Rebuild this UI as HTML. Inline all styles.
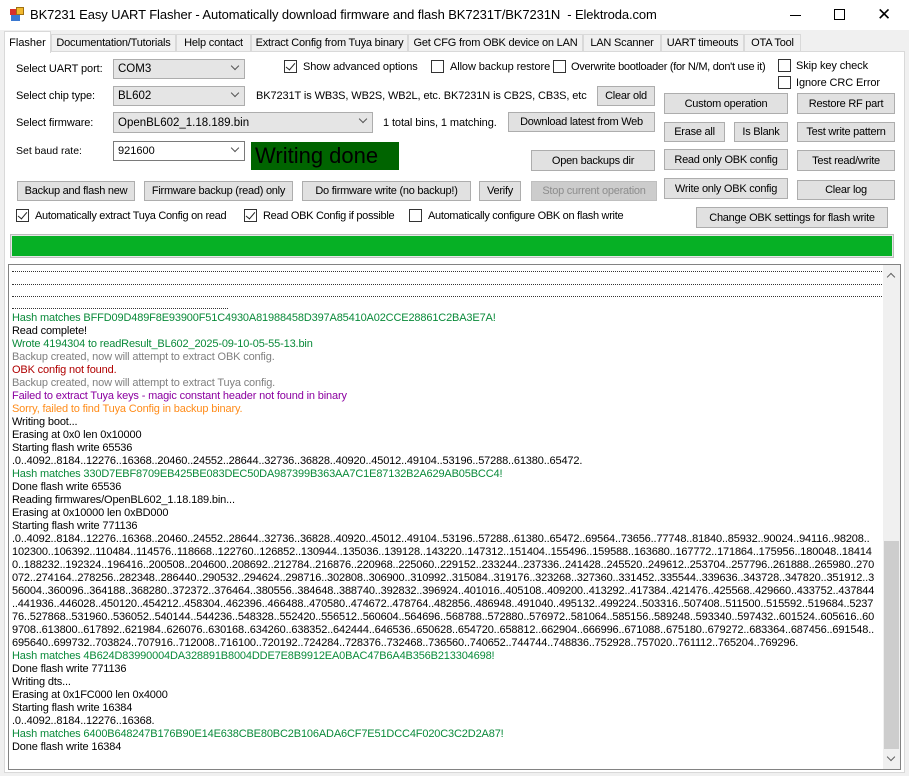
<!DOCTYPE html>
<html><head><meta charset="utf-8"><style>
*{box-sizing:border-box;margin:0;padding:0}
body{width:909px;height:776px;overflow:hidden;background:#f0f0f0;font-family:"Liberation Sans",sans-serif;font-size:11px;color:#000;position:relative}
.a{position:absolute;white-space:nowrap}
.u{font-size:11px;letter-spacing:-0.1px}
.btn{position:absolute;background:#e1e1e1;border:1px solid #adadad;text-align:center;font-size:11px;display:flex;align-items:center;justify-content:center;white-space:nowrap;letter-spacing:-0.25px}
.cb{position:absolute;width:13px;height:13px;border:1px solid #333;background:#fff}
.cb.on::after{content:"";position:absolute;left:3px;top:0px;width:4px;height:8px;border:solid #222;border-width:0 1.3px 1.3px 0;transform:rotate(40deg)}
.combo{position:absolute;background:#e5e5e5;border:1px solid #adadad;padding-left:4px;display:flex;align-items:center;font-size:11.5px}
.combo .ar{position:absolute;right:6px;top:3px;width:6px;height:6px;border:solid #555;border-width:0 1px 1px 0;transform:rotate(45deg)}
.tab{position:absolute;top:34px;height:17px;background:#f0f0f0;border:1px solid #d9d9d9;border-bottom:none;font-size:11px;letter-spacing:-0.2px;padding-top:2px;text-align:center;white-space:nowrap;overflow:hidden}
#log{position:absolute;left:8px;top:264px;width:893px;height:506px;background:#fff;border:1px solid #828282;overflow:hidden}
#log .l{position:absolute;left:3px;font-size:11px;white-space:pre;line-height:13px;letter-spacing:-0.15px}
.dot{position:absolute;left:3px;height:1px;border-top:1px dotted #333}
.g{color:#0a8a3a}.gr{color:#808080}.r{color:#b00000}.p{color:#8b00a0}.o{color:#ff8c1a}
</style></head><body>
<div class="a" style="left:0;top:0;width:909px;height:30px;background:#fff"></div>
<div class="a" style="left:10px;top:9px;width:7px;height:6px;background:#d8302a"></div>
<div class="a" style="left:16px;top:7px;width:8px;height:8px;background:#f2b92e;border:1px solid #a07010"></div>
<div class="a" style="left:11px;top:15px;width:9px;height:6px;background:#3a78d0"></div>
<div class="a" style="left:30px;top:7px;font-size:13px;letter-spacing:-0.1px">BK7231 Easy UART Flasher - Automatically download firmware and flash BK7231T/BK7231N&nbsp; - Elektroda.com</div>
<div class="a" style="left:790px;top:15px;width:11px;height:1px;background:#000"></div>
<div class="a" style="left:834px;top:9px;width:11px;height:11px;border:1px solid #000"></div>
<div class="a" style="left:877px;top:5px;font-size:17px;font-weight:300">✕</div>
<div class="a" style="left:4px;top:51px;width:901px;height:722px;background:#fff;border:1px solid #d9d9d9"></div>
<div class="tab" style="left:51px;width:125px">Documentation/Tutorials</div>
<div class="tab" style="left:176px;width:75px">Help contact</div>
<div class="tab" style="left:251px;width:157px">Extract Config from Tuya binary</div>
<div class="tab" style="left:408px;width:175px">Get CFG from OBK device on LAN</div>
<div class="tab" style="left:583px;width:78px">LAN Scanner</div>
<div class="tab" style="left:661px;width:83px">UART timeouts</div>
<div class="tab" style="left:744px;width:57px">OTA Tool</div>
<div class="a" style="left:4px;top:31px;width:47px;height:22px;background:#fff;border:1px solid #d9d9d9;border-bottom:none;text-align:center;padding-top:5px">Flasher</div>
<div class="a u" style="left:16px;top:63px">Select UART port:</div>
<div class="a u" style="left:16px;top:90px">Select chip type:</div>
<div class="a u" style="left:16px;top:117px">Select firmware:</div>
<div class="a" style="left:16px;top:145px;font-size:10.5px">Set baud rate:</div>
<div class="combo" style="left:113px;top:59px;width:132px;height:20px">COM3<span class="ar"></span></div>
<div class="combo" style="left:113px;top:86px;width:132px;height:20px">BL602<span class="ar"></span></div>
<div class="combo" style="left:113px;top:112px;width:260px;height:21px">OpenBL602_1.18.189.bin<span class="ar"></span></div>
<div class="combo" style="left:113px;top:141px;width:132px;height:20px;background:#fff;border-color:#7a7a7a;font-size:11px">921600<span class="ar"></span></div>
<div class="a" style="left:251px;top:142px;width:148px;height:28px;background:#006400;font-size:22px;padding-left:4px;line-height:28px">Writing done</div>
<div class="a u" style="left:256px;top:90px">BK7231T is WB3S, WB2S, WB2L, etc. BK7231N is CB2S, CB3S, etc</div>
<div class="a u" style="left:383px;top:117px">1 total bins, 1 matching.</div>
<div class="cb on" style="left:284px;top:60px"></div><div class="a u" style="left:303px;top:61px">Show advanced options</div>
<div class="cb" style="left:431px;top:60px"></div><div class="a u" style="left:450px;top:61px">Allow backup restore</div>
<div class="cb" style="left:553px;top:60px"></div><div class="a u" style="left:571px;top:61px;letter-spacing:-0.3px">Overwrite bootloader (for N/M, don't use it)</div>
<div class="cb" style="left:778px;top:59px"></div><div class="a u" style="left:796px;top:60px">Skip key check</div>
<div class="cb" style="left:778px;top:76px"></div><div class="a u" style="left:796px;top:77px">Ignore CRC Error</div>
<div class="btn" style="left:597px;top:86px;width:58px;height:20px">Clear old</div>
<div class="btn" style="left:664px;top:93px;width:124px;height:21px">Custom operation</div>
<div class="btn" style="left:797px;top:93px;width:98px;height:21px">Restore RF part</div>
<div class="btn" style="left:508px;top:112px;width:147px;height:20px">Download latest from Web</div>
<div class="btn" style="left:664px;top:122px;width:61px;height:20px">Erase all</div>
<div class="btn" style="left:734px;top:122px;width:54px;height:20px">Is Blank</div>
<div class="btn" style="left:797px;top:122px;width:98px;height:20px">Test write pattern</div>
<div class="btn" style="left:531px;top:150px;width:124px;height:21px">Open backups dir</div>
<div class="btn" style="left:664px;top:149px;width:124px;height:21px">Read only OBK config</div>
<div class="btn" style="left:797px;top:150px;width:98px;height:21px">Test read/write</div>
<div class="btn" style="left:17px;top:181px;width:118px;height:20px">Backup and flash new</div>
<div class="btn" style="left:144px;top:181px;width:149px;height:20px">Firmware backup (read) only</div>
<div class="btn" style="left:302px;top:181px;width:169px;height:20px">Do firmware write (no backup!)</div>
<div class="btn" style="left:479px;top:181px;width:42px;height:20px">Verify</div>
<div class="btn" style="left:531px;top:181px;width:126px;height:20px;background:#cccccc;border-color:#bfbfbf;color:#8d8d8d">Stop current operation</div>
<div class="btn" style="left:664px;top:178px;width:124px;height:21px">Write only OBK config</div>
<div class="btn" style="left:797px;top:180px;width:98px;height:20px">Clear log</div>
<div class="btn" style="left:696px;top:207px;width:192px;height:21px">Change OBK settings for flash write</div>
<div class="cb on" style="left:16px;top:209px"></div><div class="a u" style="left:35px;top:210px;letter-spacing:-0.3px">Automatically extract Tuya Config on read</div>
<div class="cb on" style="left:244px;top:209px"></div><div class="a u" style="left:263px;top:210px;letter-spacing:-0.3px">Read OBK Config if possible</div>
<div class="cb" style="left:409px;top:209px"></div><div class="a u" style="left:428px;top:210px;letter-spacing:-0.3px">Automatically configure OBK on flash write</div>
<div class="a" style="left:10px;top:234px;width:884px;height:24px;border:1px solid #bcbcbc;background:#e6e6e6;padding:1px"><div style="width:100%;height:100%;background:#06b025"></div></div>
<div id="log">
<div class="dot" style="top:6px;width:870px"></div>
<div class="dot" style="top:19px;width:870px"></div>
<div class="dot" style="top:31px;width:870px"></div>
<div class="dot" style="top:43px;width:216px"></div>
<div class="l" style="top:47px"><span class="g">Hash matches BFFD09D489F8E93900F51C4930A81988458D397A85410A02CCE28861C2BA3E7A!</span>
Read complete!
<span class="g">Wrote 4194304 to readResult_BL602_2025-09-10-05-55-13.bin</span>
<span class="gr">Backup created, now will attempt to extract OBK config.</span>
<span class="r">OBK config not found.</span>
<span class="gr">Backup created, now will attempt to extract Tuya config.</span>
<span class="p">Failed to extract Tuya keys - magic constant header not found in binary</span>
<span class="o">Sorry, failed to find Tuya Config in backup binary.</span>
Writing boot...
Erasing at 0x0 len 0x10000
Starting flash write 65536
.0..4092..8184..12276..16368..20460..24552..28644..32736..36828..40920..45012..49104..53196..57288..61380..65472.
<span class="g">Hash matches 330D7EBF8709EB425BE083DEC50DA987399B363AA7C1E87132B2A629AB05BCC4!</span>
Done flash write 65536
Reading firmwares/OpenBL602_1.18.189.bin...
Erasing at 0x10000 len 0xBD000
Starting flash write 771136
.0..4092..8184..12276..16368..20460..24552..28644..32736..36828..40920..45012..49104..53196..57288..61380..65472..69564..73656..77748..81840..85932..90024..94116..98208..
102300..106392..110484..114576..118668..122760..126852..130944..135036..139128..143220..147312..151404..155496..159588..163680..167772..171864..175956..180048..18414
0..188232..192324..196416..200508..204600..208692..212784..216876..220968..225060..229152..233244..237336..241428..245520..249612..253704..257796..261888..265980..270
072..274164..278256..282348..286440..290532..294624..298716..302808..306900..310992..315084..319176..323268..327360..331452..335544..339636..343728..347820..351912..3
56004..360096..364188..368280..372372..376464..380556..384648..388740..392832..396924..401016..405108..409200..413292..417384..421476..425568..429660..433752..437844
..441936..446028..450120..454212..458304..462396..466488..470580..474672..478764..482856..486948..491040..495132..499224..503316..507408..511500..515592..519684..5237
76..527868..531960..536052..540144..544236..548328..552420..556512..560604..564696..568788..572880..576972..581064..585156..589248..593340..597432..601524..605616..60
9708..613800..617892..621984..626076..630168..634260..638352..642444..646536..650628..654720..658812..662904..666996..671088..675180..679272..683364..687456..691548..
695640..699732..703824..707916..712008..716100..720192..724284..728376..732468..736560..740652..744744..748836..752928..757020..761112..765204..769296.
<span class="g">Hash matches 4B624D83990004DA328891B8004DDE7E8B9912EA0BAC47B6A4B356B213304698!</span>
Done flash write 771136
Writing dts...
Erasing at 0x1FC000 len 0x4000
Starting flash write 16384
.0..4092..8184..12276..16368.
<span class="g">Hash matches 6400B648247B176B90E14E638CBE80BC2B106ADA6CF7E51DCC4F020C3C2D2A87!</span>
Done flash write 16384</div>
<div class="a" style="left:874px;top:0;width:17px;height:504px;background:#f0f0f0"></div>
<div class="a" style="left:879px;top:9px;width:6px;height:6px;border:solid #606060;border-width:1px 0 0 1px;transform:rotate(45deg)"></div>
<div class="a" style="left:875px;top:276px;width:15px;height:208px;background:#cdcdcd"></div>
<div class="a" style="left:879px;top:489px;width:6px;height:6px;border:solid #606060;border-width:0 1px 1px 0;transform:rotate(45deg)"></div>
</div>
</body></html>
